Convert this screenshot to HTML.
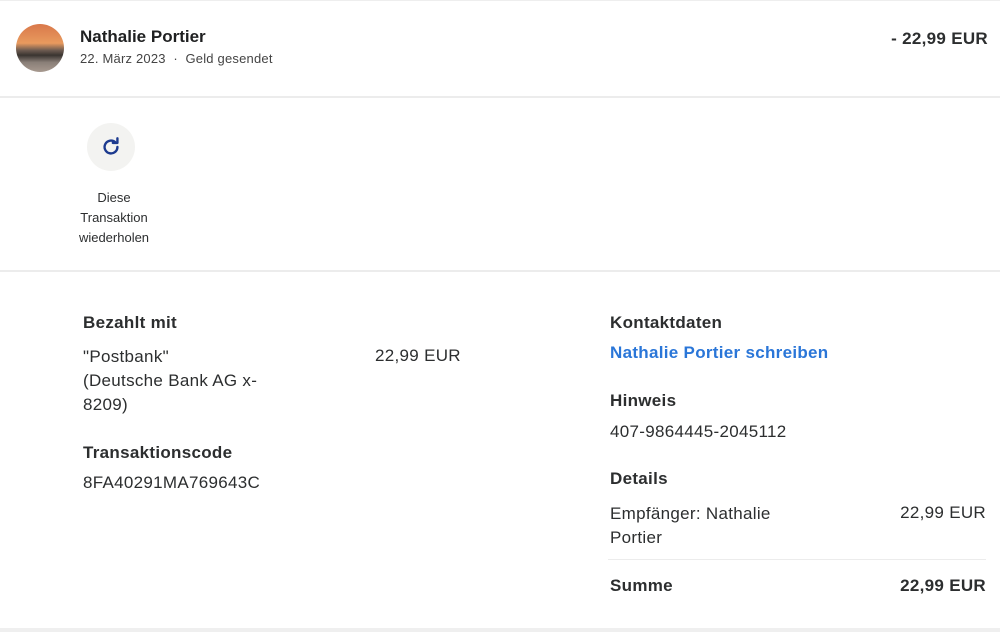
<!DOCTYPE html>
<html><head><meta charset="utf-8"><style>
body{margin:0;width:1000px;height:632px;background:#fff;font-family:"Liberation Sans",sans-serif;color:#2c2e2f;position:relative;overflow:hidden}
.a{position:absolute;white-space:nowrap}
.b{font-weight:bold}
.t{font-size:17px;letter-spacing:0.3px}
.hr{position:absolute;height:2px;background:#ececec}
</style></head><body>
<div class="a" style="left:0;top:0;width:1000px;height:1px;background:#eee"></div>
<div class="a" style="left:16px;top:24px;width:48px;height:48px;border-radius:50%;background:linear-gradient(#d9784a 0%,#e89a5e 40%,#6b5a50 55%,#3a3430 65%,#8a7f78 80%,#a89a90 100%)"></div>
<div class="a b" style="left:80px;top:27px;font-size:17px;color:#1f2021">Nathalie Portier</div>
<div class="a" style="left:80px;top:51px;font-size:13px;color:#444;letter-spacing:0.2px">22. März 2023 &nbsp;·&nbsp; Geld gesendet</div>
<div class="a b" style="right:12px;top:29px;font-size:17px;letter-spacing:0.3px">- 22,99 EUR</div>
<div class="hr" style="left:0;top:96px;width:1000px"></div>
<div class="a" style="left:87px;top:123px;width:48px;height:48px;border-radius:50%;background:#f3f3f1"></div>
<svg class="a" style="left:100px;top:136px" width="22" height="22" viewBox="0 0 24 24"><path d="M19 12a7 7 0 1 1-2.2-5.1" fill="none" stroke="#1c3a8f" stroke-width="2.6" stroke-linecap="round"/><path d="M14 4.5h5v-5" transform="translate(0,3)" fill="none" stroke="#1c3a8f" stroke-width="2.6" stroke-linecap="round" stroke-linejoin="round"/></svg>
<div class="a" style="left:60px;top:188px;width:108px;text-align:center;font-size:13px;line-height:20px;white-space:normal">Diese<br>Transaktion<br>wiederholen</div>
<div class="hr" style="left:0;top:270px;width:1000px"></div>
<div class="a b t" style="left:83px;top:313px">Bezahlt mit</div>
<div class="a t" style="left:83px;top:345px;line-height:24px">"Postbank"<br>(Deutsche Bank AG x-<br>8209)</div>
<div class="a t" style="left:375px;top:346px">22,99 EUR</div>
<div class="a b t" style="left:83px;top:443px">Transaktionscode</div>
<div class="a t" style="left:83px;top:473px">8FA40291MA769643C</div>
<div class="a b t" style="left:610px;top:313px">Kontaktdaten</div>
<div class="a b t" style="left:610px;top:343px;color:#2a76d8">Nathalie Portier schreiben</div>
<div class="a b t" style="left:610px;top:391px">Hinweis</div>
<div class="a t" style="left:610px;top:422px">407-9864445-2045112</div>
<div class="a b t" style="left:610px;top:469px">Details</div>
<div class="a t" style="left:610px;top:502px;line-height:24px">Empfänger: Nathalie<br>Portier</div>
<div class="a t" style="right:14px;top:503px">22,99 EUR</div>
<div class="hr" style="left:608px;top:559px;width:378px;height:1px"></div>
<div class="a b t" style="left:610px;top:576px">Summe</div>
<div class="a b t" style="right:14px;top:576px">22,99 EUR</div>
<div class="hr" style="left:0;top:628px;width:1000px;height:4px;background:#efefef"></div>
</body></html>
